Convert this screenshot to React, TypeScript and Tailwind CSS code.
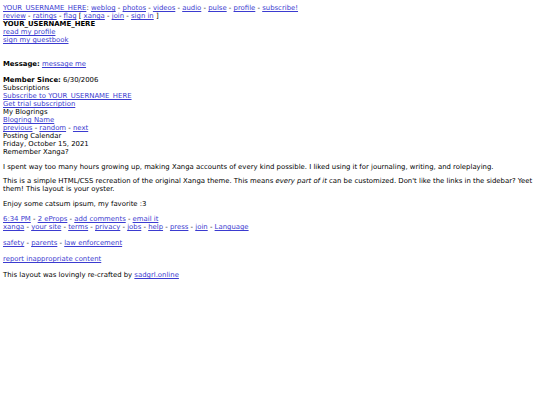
import React from 'react'

const A = ({ children }: { children: React.ReactNode }) => (
  <a href="#" className="text-[#3b3bd0] underline">
    {children}
  </a>
)

const Sep = () => <span> - </span>

export default function App() {
  return (
    <div
      className="min-h-[405px] bg-white px-[3px] pt-[4px] text-[6.9px] leading-[8px] text-black"
      style={{ fontFamily: '"DejaVu Sans", Verdana, sans-serif' }}
    >
      {/* top nav */}
      <div>
        <A>YOUR_USERNAME_HERE</A>: <A>weblog</A>
        <Sep />
        <A>photos</A>
        <Sep />
        <A>videos</A>
        <Sep />
        <A>audio</A>
        <Sep />
        <A>pulse</A>
        <Sep />
        <A>profile</A>
        <Sep />
        <A>subscribe!</A>
      </div>
      <div>
        <A>review</A>
        <Sep />
        <A>ratings</A>
        <Sep />
        <A>flag</A> [ <A>xanga</A>
        <Sep />
        <A>join</A>
        <Sep />
        <A>sign in</A> ]
      </div>

      {/* sidebar */}
      <div className="font-bold">YOUR_USERNAME_HERE</div>
      <div>
        <A>read my profile</A>
      </div>
      <div>
        <A>sign my guestbook</A>
      </div>
      <div className="h-[16px]" />
      <div>
        <b>Message:</b> <A>message me</A>
      </div>
      <div className="h-[8px]" />
      <div>
        <b>Member Since:</b> 6/30/2006
      </div>
      <div>Subscriptions</div>
      <div>
        <A>Subscribe to YOUR_USERNAME_HERE</A>
      </div>
      <div>
        <A>Get trial subscription</A>
      </div>
      <div>My Blogrings</div>
      <div>
        <A>Blogring Name</A>
      </div>
      <div>
        <A>previous</A>
        <Sep />
        <A>random</A>
        <Sep />
        <A>next</A>
      </div>
      <div>Posting Calendar</div>

      {/* entry */}
      <div>Friday, October 15, 2021</div>
      <div>Remember Xanga?</div>
      <p className="mt-[7px]">
        I spent way too many hours growing up, making Xanga accounts of every kind possible. I liked
        using it for journaling, writing, and roleplaying.
      </p>
      <p className="mt-[6px]">
        This is a simple HTML/CSS recreation of the original Xanga theme. This means{' '}
        <i>every part of it</i> can be customized. Don't like the links in the sidebar? Yeet them!
        This layout is your oyster.
      </p>
      <p className="mt-[7px]">Enjoy some catsum ipsum, my favorite :3</p>
      <div className="mt-[7px]">
        <A>6:34 PM</A>
        <Sep />
        <A>2 eProps</A>
        <Sep />
        <A>add comments</A>
        <Sep />
        <A>email it</A>
      </div>

      {/* footer */}
      <div>
        <A>xanga</A>
        <Sep />
        <A>your site</A>
        <Sep />
        <A>terms</A>
        <Sep />
        <A>privacy</A>
        <Sep />
        <A>jobs</A>
        <Sep />
        <A>help</A>
        <Sep />
        <A>press</A>
        <Sep />
        <A>join</A>
        <Sep />
        <A>Language</A>
      </div>
      <div className="mt-[8px]">
        <A>safety</A>
        <Sep />
        <A>parents</A>
        <Sep />
        <A>law enforcement</A>
      </div>
      <div className="mt-[8px]">
        <A>report inappropriate content</A>
      </div>
      <div className="mt-[8px]">
        This layout was lovingly re-crafted by <A>sadgrl.online</A>
      </div>
    </div>
  )
}
